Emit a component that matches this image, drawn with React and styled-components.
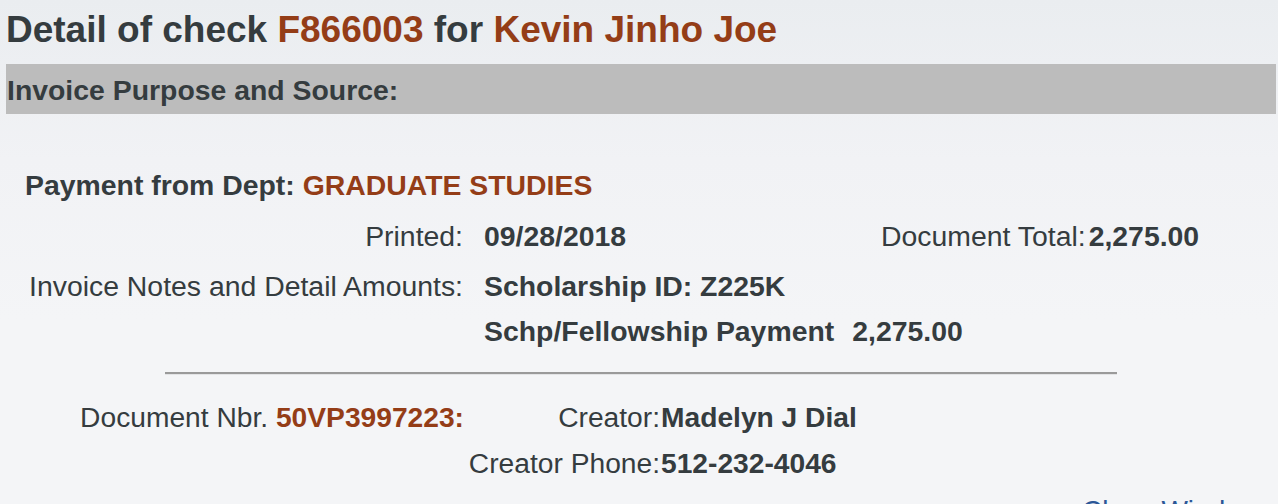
import React from "react";
import styled, { createGlobalStyle } from "styled-components";

const GlobalStyle = createGlobalStyle`
  html, body {
    margin: 0;
    padding: 0;
    overflow: hidden;
    height: 100%;
  }
  body {
    background: linear-gradient(180deg, #eaedf0 0px, #f1f2f5 160px, #f4f5f7 320px);
    font-family: "Liberation Sans", Arial, Helvetica, sans-serif;
    color: #353c3f;
  }
`;

const Page = styled.div`
  padding: 0 2px 0 6px;
`;

const Title = styled.h1`
  margin: 9px 0 13px;
  font-size: 37px;
  line-height: 42px;
  font-weight: bold;
  color: #353c3f;
`;

const Accent = styled.span`
  color: #943d17;
  font-weight: bold;
`;

const SectionBar = styled.div`
  box-sizing: border-box;
  height: 50px;
  padding: 3px 0 0 1px;
  line-height: 47px;
  background: #bcbcbc;
  font-size: 28.4px;
  font-weight: bold;
`;

const Details = styled.div`
  padding-left: 19px;
  font-size: ${(p) => p.$size || "28.4px"};
  line-height: 32px;
`;

const Row = styled.div`
  display: grid;
  grid-template-columns: ${(p) => p.$cols || "438px 376px auto"};
  column-gap: ${(p) => p.$gap || "21px"};
  margin-top: ${(p) => p.$top}px;
  white-space: nowrap;
`;

const Label = styled.div`
  text-align: right;
`;

const Value = styled.div`
  display: flex;
  gap: ${(p) => p.$gap || "6px"};
  font-weight: bold;
`;

const Heading = styled.div`
  grid-column: 1 / -1;
  font-weight: bold;
`;

const Pair = styled.div`
  display: flex;
  gap: 3px;
`;

const Rule = styled.hr`
  width: 952px;
  margin: 25px auto 0;
  border: 0;
  border-top: 2px solid #9a9a9a;
  border-bottom: 1px solid #e3e4e6;
  height: 0;
`;

const Footer = styled.div`
  display: flex;
  justify-content: flex-end;
  padding-right: 15px;
  margin-top: 16px;
  font-size: 28px;
  line-height: 32px;
`;

const Link = styled.a`
  color: #2b5797;
  text-decoration: none;
`;

export default function App() {
  return (
    <Page>
      <GlobalStyle />
      <Title>
        Detail of check <Accent>F866003</Accent> for <Accent>Kevin Jinho Joe</Accent>
      </Title>

      <SectionBar>Invoice Purpose and Source:</SectionBar>

      <Details>
        <Row $top={55}>
          <Heading>
            Payment from Dept: <Accent>GRADUATE STUDIES</Accent>
          </Heading>
        </Row>

        <Row $top={19}>
          <Label>Printed:</Label>
          <Value>09/28/2018</Value>
          <Pair>
            <span>Document Total:</span>
            <Value>2,275.00</Value>
          </Pair>
        </Row>

        <Row $top={18}>
          <Label>Invoice Notes and Detail Amounts:</Label>
          <Value>Scholarship ID: Z225K</Value>
        </Row>

        <Row $top={13}>
          <Label />
          <Value $gap="18px">
            <span>Schp/Fellowship Payment</span>
            <span>2,275.00</span>
          </Value>
        </Row>
      </Details>

      <Rule />

      <Details $size="28.2px">
        <Row $top={26} $cols="439px 195px auto" $gap="1px">
          <Label>
            Document Nbr. <Accent>50VP3997223:</Accent>
          </Label>
          <Label>Creator:</Label>
          <Value>Madelyn J Dial</Value>
        </Row>
        <Row $top={14} $cols="439px 195px auto" $gap="1px">
          <Label />
          <Label>Creator Phone:</Label>
          <Value>512-232-4046</Value>
        </Row>
      </Details>

      <Footer>
        <Link href="#">Close Window</Link>
      </Footer>
    </Page>
  );
}
